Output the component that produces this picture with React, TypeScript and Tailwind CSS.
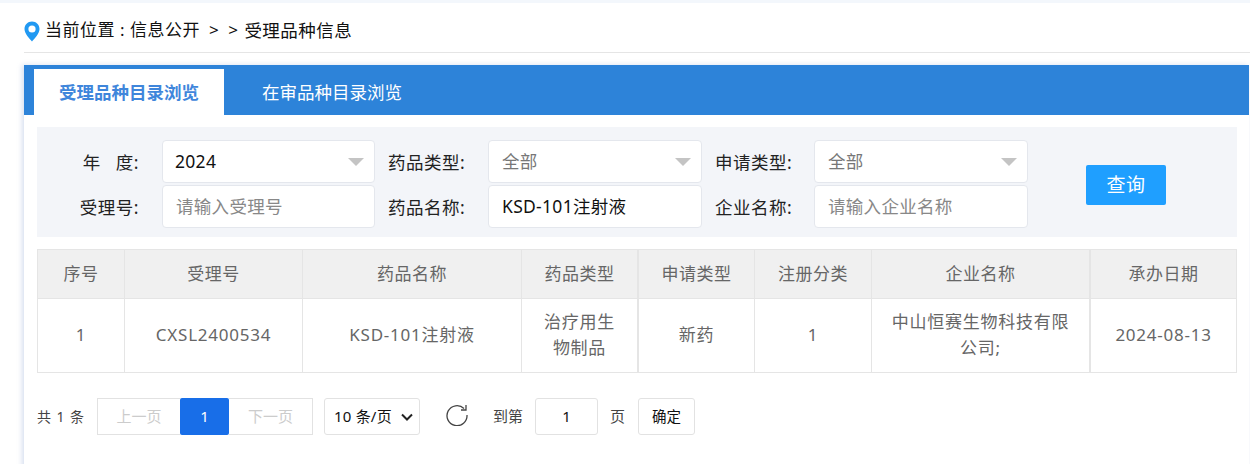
const font = { fontFamily: '"Noto Sans", "Noto Sans CJK SC", sans-serif' };

function Caret() {
  return <span className="w-0 h-0 border-x-[8px] border-x-transparent border-t-[8px] border-t-[#c4c4c4]" />;
}

function Label({ children }: { children: React.ReactNode }) {
  return <div className="text-[17.5px] tracking-[0.5px] leading-[22px] text-[#222] whitespace-pre">{children}</div>;
}

function Sel({ value, muted, w }: { value: string; muted?: boolean; w: string }) {
  return (
    <div className={`${w} h-[43px] bg-white border border-[#e4e7ed] rounded-[4px] flex items-center justify-between pr-[10px] text-[17.5px] tracking-[0.3px] ${muted ? "pl-[13px] text-[#777]" : "pl-[12px] text-[#111]"}`}>
      <span>{value}</span>
      <Caret />
    </div>
  );
}

function Inp({ value, placeholder, w }: { value?: string; placeholder?: string; w: string }) {
  return (
    <div className={`${w} h-[43px] bg-white border border-[#e4e7ed] rounded-[4px] flex items-center pl-[13px] text-[17.5px] tracking-[0.3px] ${value ? "text-[#111]" : "text-[#888]"}`}>
      {value ?? placeholder}
    </div>
  );
}

const cols = [
  ["序号", "w-[87px] border-r", "1"],
  ["受理号", "w-[178px] border-r", "CXSL2400534"],
  ["药品名称", "w-[219px] border-r", "KSD-101注射液"],
  ["药品类型", "w-[117px] border-r-2", "治疗用生物制品"],
  ["申请类型", "w-[116px] border-r", "新药"],
  ["注册分类", "w-[117px] border-r", "1"],
  ["企业名称", "w-[219px] border-r-2", "中山恒赛生物科技有限公司;"],
  ["承办日期", "w-[145px]", "2024-08-13"],
];

export default function App() {
  return (
    <div style={font} className="w-[1250px] h-[464px] bg-white overflow-hidden">
      <div className="h-[3px] bg-[#f3f7fc]" />
      <div className="ml-[24px] h-[50px] border-b border-[#e5e5e5] flex items-center pt-[5px] text-[17px] tracking-[0.5px] text-[#111] whitespace-pre">
        <svg width="16" height="21" viewBox="0 0 16 21" className="mr-[5px] mt-[2px]">
          <path d="M8 0.5C3.700 0.5 0.5 3.800 0.5 8c0 4.800 5 9.600 7.500 12.500 2.500-2.900 7.500-7.700 7.500-12.500C15.500 3.800 12.300 0.5 8 0.5z" fill="#2199f2" />
          <circle cx="8" cy="8" r="3.600" fill="#fff" />
        </svg>
        <span>当前位置 : 信息公开</span>
        <span className="ml-[9px]">&gt;</span>
        <span className="ml-[9px]">&gt;</span>
        <span className="ml-[6px] text-[17.5px]">受理品种信息</span>
      </div>
      <div className="ml-[24px] mt-[12px] w-[1225px] h-[411px] shadow-[-2px_0_5px_rgba(205,215,235,0.8)]">
        <div className="h-[50px] bg-[#2d83d9] flex items-end pl-[10px]">
          <div className="w-[190px] h-[46px] bg-white text-[#3f86db] font-semibold text-[17.5px] flex items-center justify-center">受理品种目录浏览</div>
          <div className="w-[216px] h-[46px] text-white text-[17.5px] flex items-center justify-center">在审品种目录浏览</div>
        </div>
        <div className="mx-[13px] mt-[12px] w-[1200px] h-[110px] bg-[#f3f5f9] flex items-start pt-[13px]">
          <div className="flex flex-col gap-[2px]">
            <div className="flex items-center">
              <div className="w-[125px] flex justify-end pr-[23px]"><Label>年   度:</Label></div>
              <Sel value="2024" w="w-[213px]" />
              <div className="w-[113px] pl-[13px]"><Label>药品类型:</Label></div>
              <Sel value="全部" muted w="w-[214px]" />
              <div className="w-[112px] pl-[13px]"><Label>申请类型:</Label></div>
              <Sel value="全部" muted w="w-[214px]" />
            </div>
            <div className="flex items-center">
              <div className="w-[125px] flex justify-end pr-[23px]"><Label>受理号:</Label></div>
              <Inp placeholder="请输入受理号" w="w-[213px]" />
              <div className="w-[113px] pl-[13px]"><Label>药品名称:</Label></div>
              <Inp value="KSD-101注射液" w="w-[214px]" />
              <div className="w-[112px] pl-[13px]"><Label>企业名称:</Label></div>
              <Inp placeholder="请输入企业名称" w="w-[214px]" />
            </div>
          </div>
          <div className="ml-[58px] mt-[25px] w-[80px] h-[40px] bg-[#1f9fff] rounded-[2px] text-white text-[19px] tracking-[0.5px] flex items-center justify-center">查询</div>
        </div>
        <div className="mx-[13px] mt-[12px] w-[1200px] h-[124px] border border-[#e5e5e5] flex text-[17px] tracking-[0.5px] text-[#666]">
          {cols.map(([h, w, v]) => (
            <div key={h} className={`${w} shrink-0 flex flex-col border-[#e5e5e5]`}>
              <div className="h-[49px] bg-[#f0f0f0] border-b border-[#e5e5e5] flex items-center justify-center">{h}</div>
              <div className="flex-1 flex items-center justify-center text-center leading-[26px] px-[16px] pb-[1px] tracking-[0.75px]">{v}</div>
            </div>
          ))}
        </div>
        <div className="mt-[25px] ml-[13px] flex items-center text-[15px] text-[#444]">
          <span className="w-[60px] whitespace-pre text-[14px] tracking-[0.9px]">共 1 条</span>
          <div className="flex h-[37px]">
            <div className="w-[83px] border border-r-0 border-[#e2e2e2] text-[#ccc] flex items-center justify-center">上一页</div>
            <div className="w-[49px] bg-[#186ee8] text-white rounded-[2px] flex items-center justify-center">1</div>
            <div className="w-[84px] border border-l-0 border-[#e2e2e2] text-[#ccc] flex items-center justify-center">下一页</div>
          </div>
          <div className="ml-[11px] w-[96px] h-[37px] border border-[#e2e2e2] rounded-[3px] flex items-center pl-[9px] text-[#111] whitespace-pre tracking-[0.2px]">
            10 条/页
            <svg width="12" height="8" viewBox="0 0 12 8" className="ml-[9px]"><path d="M1 1.500l5 5 5-5" fill="none" stroke="#222" strokeWidth="2" /></svg>
          </div>
          <svg width="22" height="22" viewBox="0 0 22 22" className="ml-[26px] mb-[3px]">
            <path d="M18 4.500A10 10 0 1 0 21 11" fill="none" stroke="#444" strokeWidth="1.300" />
            <path d="M20 1v5h-5" fill="none" stroke="#444" strokeWidth="1.300" />
          </svg>
          <span className="ml-[25px]">到第</span>
          <div className="ml-[12px] w-[63px] h-[37px] border border-[#e2e2e2] rounded-[3px] flex items-center justify-center text-[#111]">1</div>
          <span className="ml-[12px]">页</span>
          <div className="ml-[13px] w-[57px] h-[37px] border border-[#e2e2e2] rounded-[3px] flex items-center justify-center text-[#111] text-[14.5px]">确定</div>
        </div>
      </div>
    </div>
  );
}
